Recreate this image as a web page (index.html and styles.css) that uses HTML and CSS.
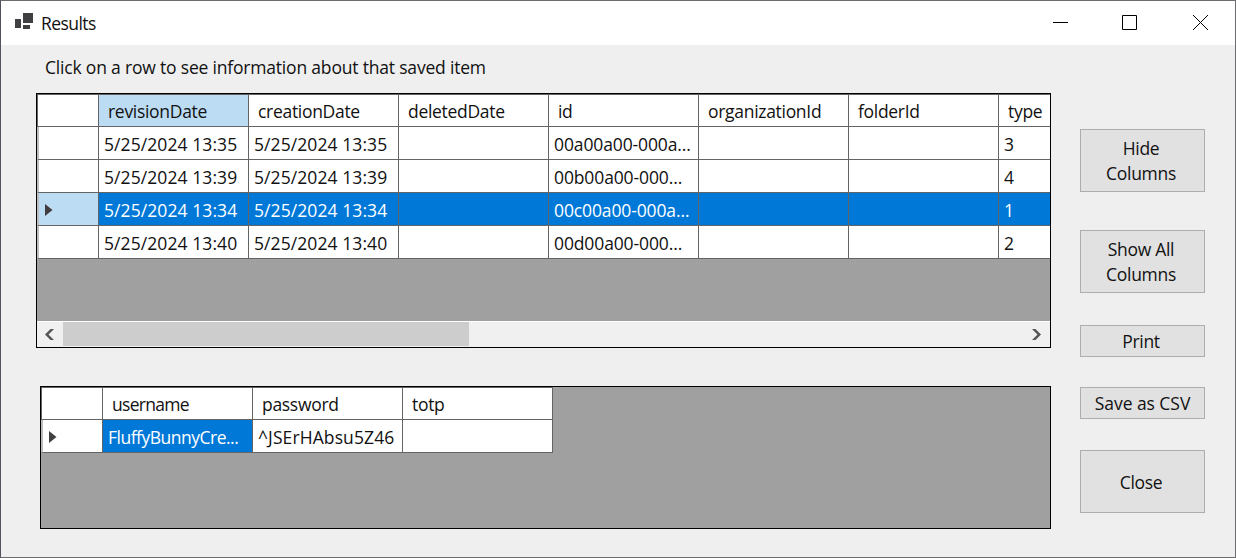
FILE: index.html
```html
<!DOCTYPE html>
<html lang="en">
<head>
<meta charset="utf-8">
<title>Results</title>
<link rel="stylesheet" href="styles.css">
</head>
<body>
<div class="window">
  <header class="titlebar">
    <svg class="app-icon" width="20" height="18" viewBox="0 0 20 18"><rect x="8" y="1" width="10" height="10" fill="#404043"/><rect x="0" y="7" width="6" height="9" fill="#404043"/><rect x="8" y="13" width="7" height="4" fill="#404043"/></svg>
    <span class="title">Results</span>
    <svg class="controls" width="157" height="16" viewBox="0 0 157 16" fill="none" stroke="#000"><path d="M0 7.5H15M69.500 .5H83.500V14.500H69.500Z"/><path d="M140 0L155 15M155 0L140 15"/></svg>
  </header>
  <main class="content">
    <section class="tables">
      <p class="hint"><span>Click on a row to see information about that saved item</span></p>
      <div class="grid items">
        <div class="row head"><div class="cell mark"></div><div class="cell active">revisionDate</div><div class="cell">creationDate</div><div class="cell">deletedDate</div><div class="cell">id</div><div class="cell">organizationId</div><div class="cell">folderId</div><div class="cell">type</div></div>
        <div class="row"><div class="cell mark"></div><div class="cell date">5/25/2024 13:35</div><div class="cell date">5/25/2024 13:35</div><div class="cell"></div><div class="cell id">00a00a00-000a...</div><div class="cell"></div><div class="cell"></div><div class="cell">3</div></div>
        <div class="row"><div class="cell mark"></div><div class="cell date">5/25/2024 13:39</div><div class="cell date">5/25/2024 13:39</div><div class="cell"></div><div class="cell id">00b00a00-000...</div><div class="cell"></div><div class="cell"></div><div class="cell">4</div></div>
        <div class="row selected"><div class="cell mark"><svg width="9" height="14" viewBox="0 0 9 14"><path d="M1 1L8.500 7L1 13Z" fill="#403c40"/></svg></div><div class="cell date">5/25/2024 13:34</div><div class="cell date">5/25/2024 13:34</div><div class="cell"></div><div class="cell id">00c00a00-000a...</div><div class="cell"></div><div class="cell"></div><div class="cell">1</div></div>
        <div class="row"><div class="cell mark"></div><div class="cell date">5/25/2024 13:40</div><div class="cell date">5/25/2024 13:40</div><div class="cell"></div><div class="cell id">00d00a00-000...</div><div class="cell"></div><div class="cell"></div><div class="cell">2</div></div>
        <div class="scrollbar">
          <svg width="26" height="24" viewBox="0 0 26 24"><path d="M8 12.500L13.500 7H17L11.500 12.500L17 18H13.500Z" fill="#555"/></svg>
          <div class="thumb"></div>
          <svg width="26" height="24" viewBox="0 0 26 24"><path d="M17 12.500L11.500 7H8L13.500 12.500L8 18H11.500Z" fill="#555"/></svg>
        </div>
      </div>
      <div class="grid login">
        <div class="row head"><div class="cell mark"></div><div class="cell user">username</div><div class="cell">password</div><div class="cell">totp</div></div>
        <div class="row"><div class="cell mark"><svg width="9" height="14" viewBox="0 0 9 14"><path d="M1 1L8.500 7L1 13Z" fill="#404040"/></svg></div><div class="cell picked">FluffyBunnyCre...</div><div class="cell secret">^JSErHAbsu5Z46</div><div class="cell"></div></div>
      </div>
    </section>
    <nav class="actions">
      <button class="btn tall">Hide<br>Columns</button>
      <button class="btn tall show">Show All<br>Columns</button>
      <button class="btn print">Print</button>
      <button class="btn save">Save as CSV</button>
      <button class="btn tall close">Close</button>
    </nav>
  </main>
</div>
</body>
</html>
```
FILE: styles.css
```css
* { box-sizing: border-box; }
body {
  margin: 0;
  font: 17.5px/25px "Open Sans", "Noto Sans", sans-serif;
  letter-spacing: -0.3px;
  color: #111;
}
.window {
  width: 1236px;
  height: 558px;
  background: #efefef;
  border: 1px solid #6c6b6e;
  border-left-color: #50525c;
  overflow: hidden;
}
.titlebar {
  height: 44px;
  background: #fff;
  display: flex;
  align-items: center;
  padding: 0 25px 0 14px;
}
.app-icon { margin-bottom: 4px; }
.title { margin-left: 6px; letter-spacing: -0.55px; }
.controls { margin-left: auto; }
.content { display: flex; }
.tables { width: 1050px; padding-left: 35px; }
.hint {
  margin: 0;
  padding: 10px 0 0 9px;
  height: 48px;
  white-space: nowrap;
  letter-spacing: -0.19px;
}
.grid {
  border: 1px solid #000;
  background: #a0a0a0;
  display: flex;
  flex-direction: column;
  overflow: hidden;
}
.items { height: 255px; }
.login { height: 143px; margin: 38px 0 0 4px; }
.row { display: flex; flex: none; height: 33px; }
.cell {
  flex: none;
  width: 150px;
  border: solid #646464;
  border-width: 0 1px 1px 0;
  background: #fff;
  padding: 5px 0 0 5px;
  white-space: nowrap;
}
.mark { width: 62px; border-left: 2px solid #bdbdbd; padding: 10px 0 0 5px; line-height: 0; }
.head .cell { border-top: 1px solid #646464; padding: 4px 0 0 9px; }
.head .mark { border-left: 1px solid #646464; }
.head .user { letter-spacing: -0.7px; }
.date { letter-spacing: 0.08px; }
.id { letter-spacing: -0.12px; }
.secret { letter-spacing: 0.1px; }
.selected .cell { background: #0078d7; color: #fff; }
.selected .mark, .head .active { background: #bcdcf4; }
.picked { background: #0078d7; color: #fff; letter-spacing: -0.5px; }
.scrollbar {
  display: flex;
  height: 26px;
  margin-top: auto;
  border-top: 1px solid #fff;
  background: #f0f0f0;
}
.thumb { width: 406px; height: 24px; background: #cdcdcd; margin-right: auto; }
.actions {
  display: flex;
  flex-direction: column;
  padding: 84px 0 0 29px;
}
.btn {
  width: 125px;
  height: 32px;
  margin: 0 0 30px;
  padding: 1px 3px 0 0;
  border: 1px solid #adadad;
  background: #e1e1e1;
  font: inherit;
  letter-spacing: inherit;
  color: #111;
}
.tall { height: 63px; margin-bottom: 38px; }
.show { margin-bottom: 32px; }
.save { margin-bottom: 31px; letter-spacing: -0.05px; padding-right: 0; }
```
